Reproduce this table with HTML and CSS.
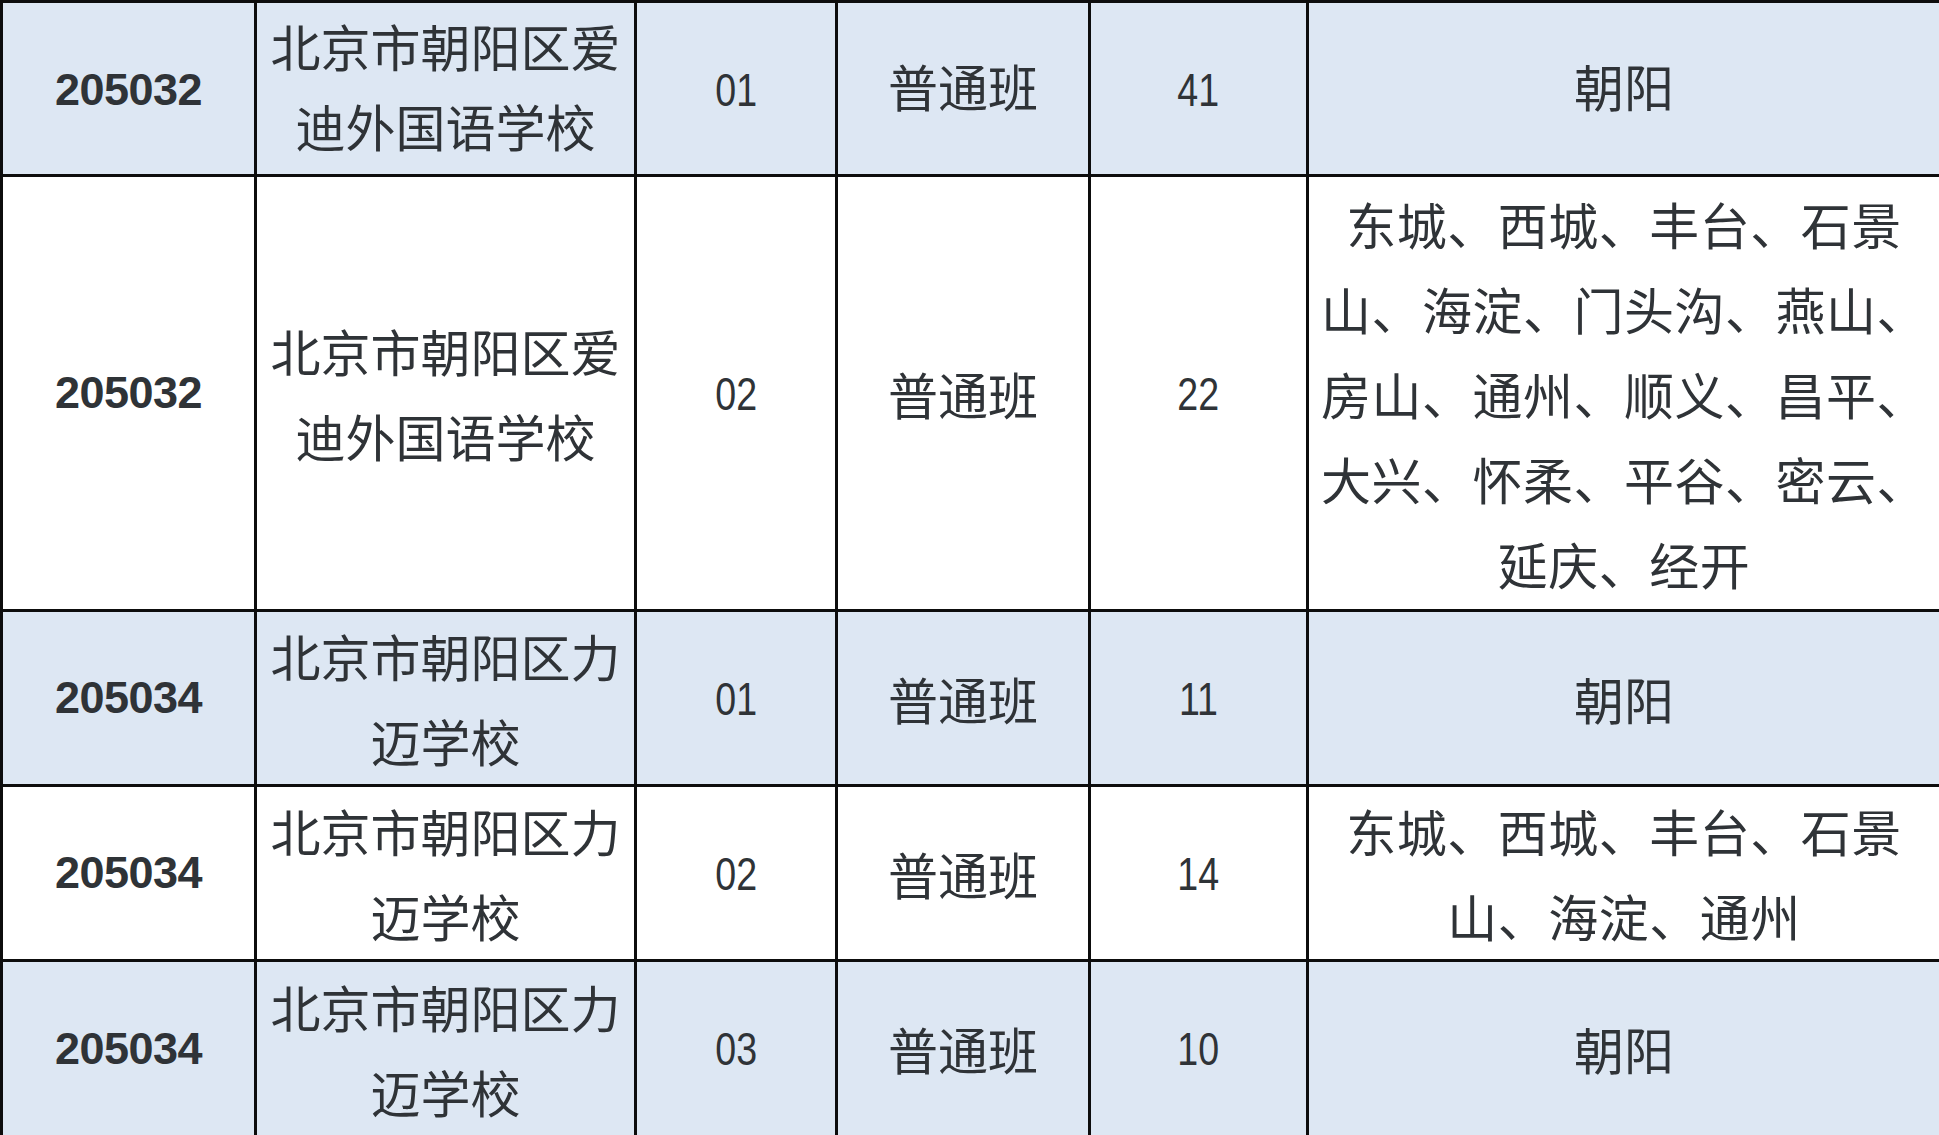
FILE: index.html
```html
<!DOCTYPE html>
<html lang="zh-CN">
<head>
<meta charset="utf-8">
<title>招生计划</title>
<link rel="stylesheet" href="styles.css">
</head>
<body>
<table class="plan">
  <colgroup>
    <col class="c-code">
    <col class="c-school">
    <col class="c-num">
    <col class="c-type">
    <col class="c-count">
    <col class="c-area">
  </colgroup>
  <tbody>
    <tr class="row r1 shaded">
      <td class="code">205032</td>
      <td class="cn">北京市朝阳区爱<br>迪外国语学校</td>
      <td class="num"><span class="narrow">01</span></td>
      <td class="cn">普通班</td>
      <td class="num"><span class="narrow">41</span></td>
      <td class="cn">朝阳</td>
    </tr>
    <tr class="row r2">
      <td class="code">205032</td>
      <td class="cn">北京市朝阳区爱<br>迪外国语学校</td>
      <td class="num"><span class="narrow">02</span></td>
      <td class="cn">普通班</td>
      <td class="num"><span class="narrow">22</span></td>
      <td class="cn area">东城、西城、丰台、石景<br>山、海淀、门头沟、燕山、<br>房山、通州、顺义、昌平、<br>大兴、怀柔、平谷、密云、<br>延庆、经开</td>
    </tr>
    <tr class="row r3 shaded">
      <td class="code">205034</td>
      <td class="cn">北京市朝阳区力<br>迈学校</td>
      <td class="num"><span class="narrow">01</span></td>
      <td class="cn">普通班</td>
      <td class="num"><span class="narrow">11</span></td>
      <td class="cn">朝阳</td>
    </tr>
    <tr class="row r4">
      <td class="code">205034</td>
      <td class="cn">北京市朝阳区力<br>迈学校</td>
      <td class="num"><span class="narrow">02</span></td>
      <td class="cn">普通班</td>
      <td class="num"><span class="narrow">14</span></td>
      <td class="cn area">东城、西城、丰台、石景<br>山、海淀、通州</td>
    </tr>
    <tr class="row r5 shaded">
      <td class="code">205034</td>
      <td class="cn">北京市朝阳区力<br>迈学校</td>
      <td class="num"><span class="narrow">03</span></td>
      <td class="cn">普通班</td>
      <td class="num"><span class="narrow">10</span></td>
      <td class="cn">朝阳</td>
    </tr>
  </tbody>
</table>
</body>
</html>
```
FILE: styles.css
```css
html, body {
  margin: 0;
  padding: 0;
  background: #ffffff;
}

.plan {
  width: 1939px;
  border-collapse: collapse;
  table-layout: fixed;
  color: #2f3337;
  font-family: "Noto Sans CJK SC", "Liberation Sans", sans-serif;
}

.c-code { width: 254px; }
.c-school { width: 380px; }
.c-num { width: 201px; }
.c-type { width: 253px; }
.c-count { width: 218px; }
.c-area { width: 633px; }

.plan td {
  border: 3px solid #0d0d0d;
  padding: 0;
  text-align: center;
  vertical-align: middle;
  white-space: nowrap;
}

.shaded td {
  background: #dde7f3;
}

.r1 { height: 174px; }
.r2 { height: 435px; }
.r3 { height: 175px; }
.r4 { height: 175px; }
.r5 { height: 176px; }

.cn {
  font-size: 50px;
  line-height: 85px;
}

.area {
  letter-spacing: 0.5px;
}

.r1 .cn {
  line-height: 80px;
  padding-bottom: 8px;
}

.code {
  font-family: "Liberation Sans", Arial, sans-serif;
  font-weight: bold;
  font-size: 45px;
  letter-spacing: -0.5px;
}

.num {
  font-family: "Liberation Sans", Arial, sans-serif;
  font-size: 47px;
}

.narrow {
  display: inline-block;
  transform: scaleX(0.8);
}

.r1 .code, .r1 .num {
  padding-top: 2px;
}
```
